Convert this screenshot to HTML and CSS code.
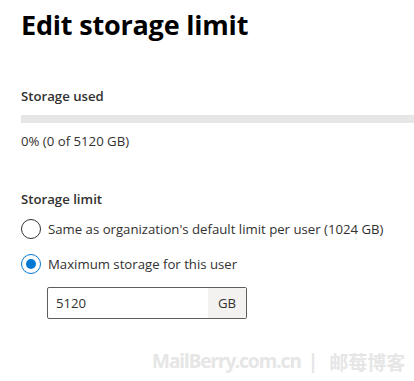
FILE: index.html
```html
<!DOCTYPE html>
<html lang="en">
<head>
<meta charset="utf-8">
<link rel="stylesheet" href="styles.css">
</head>
<body>
<div class="panel">
  <h1 class="title">Edit storage limit</h1>
  <section class="used">
    <div class="label">Storage used</div>
    <div class="bar"><div class="bar-fill" style="width:0%"></div></div>
    <div class="used-text">0% (0 of 5120 GB)</div>
  </section>
  <section class="limit">
    <div class="label">Storage limit</div>
    <div class="radios">
      <label class="radio">
        <span class="circle"></span>
        <span class="radio-text">Same as organization's default limit per user (1024 GB)</span>
      </label>
      <label class="radio">
        <span class="circle checked"></span>
        <span class="radio-text">Maximum storage for this user</span>
      </label>
    </div>
    <div class="field">
      <span class="field-value">5120</span>
      <span class="field-suffix">GB</span>
    </div>
  </section>
  <div class="watermark"><span class="wm-latin">MailBerry.com.cn</span><span class="sep">|</span><span class="wm-cjk">邮莓博客</span></div>
</div>
</body>
</html>
```
FILE: styles.css
```css
* { box-sizing: border-box; }
html, body { margin: 0; padding: 0; background: #fff; }
body {
  font-family: "Open Sans", "Noto Sans", sans-serif;
  color: #323130;
  width: 414px;
  height: 381px;
  overflow: hidden;
}
.panel {
  position: relative;
  padding: 7px 0 0 21px;
  height: 381px;
}
.title {
  margin: 0;
  font-size: 27px;
  font-weight: 700;
  color: #000;
  line-height: 36px;
  letter-spacing: -0.2px;
}
.used { margin-top: 44px; }
.label {
  font-size: 13.2px;
  font-weight: 600;
  line-height: 18px;
  color: #323130;
}
.bar {
  margin-top: 10px;
  height: 8px;
  background: #e6e6e6;
  margin-right: -2px;
}
.bar-fill { height: 100%; background: #0078d4; }
.used-text {
  margin-top: 9px;
  font-size: 13.2px;
  line-height: 18px;
}
.limit { margin-top: 40px; }
.radios {
  margin-top: 11px;
  display: flex;
  flex-direction: column;
  gap: 15px;
}
.radio {
  display: flex;
  align-items: center;
  gap: 7px;
  font-size: 13.2px;
  line-height: 20px;
}
.circle {
  width: 20px;
  height: 20px;
  border-radius: 50%;
  border: 1px solid #323130;
  flex: none;
  position: relative;
}
.circle.checked { border-color: #0078d4; }
.circle.checked::after {
  content: "";
  position: absolute;
  left: 4px; top: 4px;
  width: 10px; height: 10px;
  border-radius: 50%;
  background: #0078d4;
}
.field {
  margin: 13px 0 0 26px;
  width: 200px;
  height: 32px;
  border: 1px solid #605e5c;
  border-radius: 2px;
  display: flex;
  align-items: stretch;
  font-size: 13.2px;
}
.field-value {
  flex: 1;
  display: flex;
  align-items: center;
  padding-left: 8px;
}
.field-suffix {
  width: 38px;
  background: #f3f2f1;
  display: flex;
  align-items: center;
  justify-content: center;
  color: #323130;
}
.watermark {
  position: absolute;
  left: 152px;
  top: 348px;
  font-family: "Noto Sans", "Noto Sans CJK SC", sans-serif;
  font-size: 19px;
  font-weight: 700;
  color: #e6e6e6;
  white-space: nowrap;
  display: flex;
}
.wm-latin { letter-spacing: -1px; }
.wm-cjk { letter-spacing: 0; }
.watermark .sep { margin: 0 11px 0 7px; }
```
